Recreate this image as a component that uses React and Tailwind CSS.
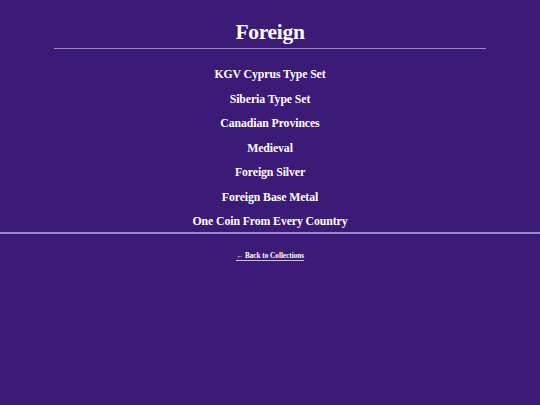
const collections = [
  'KGV Cyprus Type Set',
  'Siberia Type Set',
  'Canadian Provinces',
  'Medieval',
  'Foreign Silver',
  'Foreign Base Metal',
  'One Coin From Every Country',
];

export default function App() {
  return (
    <div
      className="min-h-screen bg-[#3c1a78] text-white"
      style={{ fontFamily: '"Liberation Serif", serif' }}
    >
      <header className="pt-[18px]">
        <h1 className="text-center text-[21.5px] font-bold leading-[28px] tracking-[-0.3px]">
          Foreign
        </h1>
        <hr className="mx-[54px] mt-[2px] border-0 border-t border-[#9a87c6]" />
      </header>

      <ul className="flex flex-col items-center gap-[4.5px] pt-[15px] pb-[1px]">
        {collections.map((name) => (
          <li key={name} className="text-[11.8px] font-bold leading-[20px] tracking-[-0.1px]">
            <a href="#">{name}</a>
          </li>
        ))}
      </ul>

      <div className="h-[2px] bg-[#9a87c6]" />

      <div className="flex justify-center pt-[17px]">
        <a
          href="#"
          className="text-[7.2px] font-bold leading-[10px] underline underline-offset-2 decoration-[#c9bde6]"
        >
          ← Back to Collections
        </a>
      </div>
    </div>
  );
}
